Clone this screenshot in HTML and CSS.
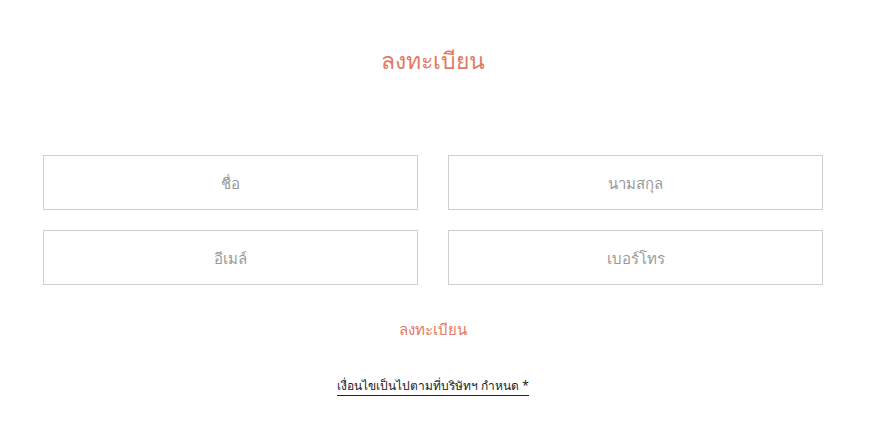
FILE: index.html
```html
<!DOCTYPE html>
<html lang="th">
    <head>
        <meta charset="utf-8">
        <title>ลงทะเบียน</title>
        <link rel="stylesheet" href="styles.css">
    </head>
    <body>
        <div id="register">
            <h2 class="title">ลงทะเบียน</h2>
            <div class="fields">
                <input class="field" type="text" name="fname" placeholder="ชื่อ" autocomplete="off">
                <input class="field" type="text" name="lname" placeholder="นามสกุล" autocomplete="off">
                <input class="field" type="text" name="email" placeholder="อีเมล์" autocomplete="off">
                <input class="field" type="text" name="phone" placeholder="เบอร์โทร" autocomplete="off">
            </div>
            <div class="center">
                <button class="submit">ลงทะเบียน</button>
            </div>
            <div class="center">
                <a class="terms" href="#">เงื่อนไขเป็นไปตามที่บริษัทฯ กำหนด *</a>
            </div>
        </div>
    </body>
</html>
```

FILE: styles.css
```css
body, html{
    margin: 0;
    background: white;
    font-family: "Noto Sans", "Liberation Sans", sans-serif;
}
#register{
    width: 780px;
    margin-left: 43px;
    padding-top: 44px;
}
.center{
    text-align: center;
}
.title{
    margin: 0 0 79px;
    text-align: center;
    font-size: 23px;
    font-weight: normal;
    color: #e27a63;
    line-height: 32px;
}
.fields{
    display: grid;
    grid-template-columns: 1fr 1fr;
    column-gap: 30px;
    row-gap: 20px;
}
.field{
    box-sizing: border-box;
    height: 55px;
    width: 100%;
    border: 1px solid #cfcfcf;
    text-align: center;
    font-size: 15px;
    font-family: inherit;
    outline: none;
}
.field::placeholder{
    color: #999;
}
.submit{
    margin-top: 32px;
    background: none;
    border: none;
    padding: 0;
    font-family: inherit;
    font-size: 15px;
    line-height: 24px;
    color: #e27a63;
    cursor: pointer;
}
.terms{
    display: inline-block;
    margin-top: 36px;
    font-size: 12px;
    line-height: 18px;
    color: #222;
    text-decoration: none;
    border-bottom: 1px solid #222;
}
```
